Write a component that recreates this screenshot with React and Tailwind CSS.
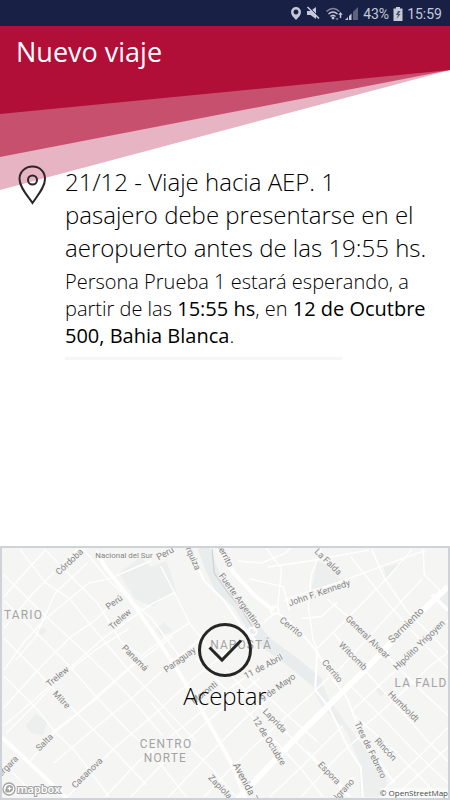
import React from 'react';

const parks = [
  'M118 572 L140 556 L150 566 L166 560 L176 590 L152 606 L134 598 Z',
  'M318 560 L334 566 L342 580 L312 590 Z',
  'M385 566 L404 562 L388 577 Z',
  'M434 597 L450 586 L450 614 Z',
  'M24 726 L34 714 L46 722 L42 736 L30 734 Z',
  'M155 628 L164 622 L172 630 L160 636 Z',
  'M377 690 L382 687 L388 692 L382 697 Z',
  'M36 630 L42 627 L45 631 L40 635 Z',
  'M312 672 L322 680 L330 700 L346 722 L362 744 L388 778 L388 798 L362 798 L360 762 L348 732 L322 706 L314 690 Z',
];

const streets = [
  // towards the lower right
  'M18 548 L44 582 L68 598 L94 630 L126 668 L160 704 L196 742',
  'M43 548 L74 580 L96 602 L120 641 L140 655',
  'M2 574 L40 612 L75 644 L104 672 L130 698 L162 736',
  'M2 600 L32 630 L66 664 L96 698 L128 732 L150 752 L186 798',
  'M2 638 L36 672 L74 712 L112 750 L146 786',
  'M2 676 L35 709 L55 734 L74 752 L108 798',
  'M82 548 L110 582 L150 617 L182 660',
  'M2 764 L34 798',
  'M196 658 L236 700 L270 736 L302 770 L324 798',
  'M226 670 L262 708 L296 742 L330 776 L350 798',
  'M250 678 L284 712 L318 742',
  'M150 702 L180 738 L214 772 L236 798',
  'M160 565 L174 592 L190 624 L212 652',
  'M373 548 L386 578 L410 612 L450 652',
  'M352 556 L387 600 L424 642 L450 668',
  'M328 598 L349 616 L381 648 L420 688 L450 716',
  'M334 632 L366 670 L398 706 L428 740 L450 762',
  'M350 684 L382 716 L414 750 L450 784',
  'M356 716 L394 750 L424 780 L440 798',
  'M308 752 L340 784 L352 798',
  'M425 548 L426 574 L446 594',
  // towards the upper right
  'M2 596 L26 568 L43 550',
  'M2 628 L30 594 L52 572 L76 548',
  'M2 670 L22 642 L44 618 L88 582 L108 578 L150 560',
  'M14 660 L34 636 L54 592 L86 562',
  'M2 708 L36 670 L70 636 L95 619 L120 594',
  'M4 734 L32 706 L66 670 L102 638 L150 604 L174 592',
  'M2 726 L28 704 L60 676 L94 650 L128 628',
  'M38 746 L54 730 L76 714 L114 680 L150 648 L190 622',
  'M28 762 L54 732 L94 700 L134 664 L172 636',
  'M52 764 L92 730 L134 696 L176 658 L206 634',
  'M66 798 L112 750 L150 718 L196 676 L232 648',
  'M104 798 L138 762 L184 726 L228 690 L264 664',
  'M130 798 L176 750 L214 716 L260 678',
  'M168 798 L206 758 L246 718 L280 690',
  'M204 798 L232 768 L268 734 L306 700 L338 670',
  'M270 798 L306 764 L344 726',
  'M302 798 L340 756 L360 738',
  'M334 798 L354 778',
  'M386 790 L420 758 L450 728',
  'M396 798 L450 748',
  'M364 728 L396 700 L432 666 L450 652',
  'M352 712 L382 684 L420 650 L450 620',
  'M318 648 L348 618 L388 578 L414 548',
  'M338 672 L378 628 L424 578',
  'M300 594 L344 580 L384 565 L428 549',
  'M268 566 L310 560 L370 549',
  'M302 618 L322 616 L338 602',
  'M322 548 L312 574 L309 606 L314 640 L318 650',
  'M238 560 L262 562 L286 552 L292 546',
  'M250 578 L284 586 L290 610',
  'M266 546 L282 568 L278 608',
  'M284 600 L300 594',
  'M254 630 L276 612',
];

const labels = [
  { text: 'Córdoba', x: 70, y: 563, angle: -43 },
  { text: 'Nacional del Sur', x: 123, y: 557, angle: 0, small: true },
  { text: 'Perú', x: 115, y: 604, angle: -36 },
  { text: 'Trelew', x: 121, y: 621, angle: -42 },
  { text: 'Panamá', x: 132, y: 660, angle: 45 },
  { text: 'Perú', x: 166, y: 555, angle: -28 },
  { text: 'Urquiza', x: 189, y: 556, angle: 66 },
  { text: 'Cerrito', x: 222, y: 555, angle: 62 },
  { text: 'Fuerte Argentino', x: 238, y: 602, angle: 54 },
  { text: 'La Falda', x: 327, y: 563, angle: 44 },
  { text: 'John F. Kennedy', x: 321, y: 595, angle: -19 },
  { text: 'General Alvear', x: 367, y: 639, angle: 44 },
  { text: 'Witcomb', x: 352, y: 658, angle: 45 },
  { text: 'Sarmiento', x: 410, y: 627, angle: -45, large: true },
  { text: 'Hipólito Yrigoyen', x: 423, y: 647, angle: -44 },
  { text: 'Cerrito', x: 290, y: 629, angle: 38 },
  { text: 'Cerrito', x: 331, y: 673, angle: 50 },
  { text: 'Paraguay', x: 181, y: 662, angle: -36 },
  { text: '11 de Abril', x: 265, y: 669, angle: -28 },
  { text: '9 de Mayo', x: 280, y: 690, angle: -36 },
  { text: 'Moronti', x: 206, y: 695, angle: -38 },
  { text: 'Laprida', x: 273, y: 723, angle: 46 },
  { text: '12 de Octubre', x: 267, y: 743, angle: 58 },
  { text: 'Avenida 7', x: 243, y: 785, angle: 62, large: true },
  { text: 'Zapiola', x: 218, y: 790, angle: 46 },
  { text: 'Trelew', x: 58, y: 679, angle: -40 },
  { text: 'Mitre', x: 58, y: 702, angle: 46 },
  { text: 'Salta', x: 45, y: 745, angle: -45 },
  { text: 'Vergara', x: 6, y: 771, angle: -45 },
  { text: 'Casanova', x: 88, y: 776, angle: -44 },
  { text: 'Humboldt', x: 403, y: 709, angle: 45 },
  { text: 'Tres de Febrero', x: 369, y: 752, angle: 64 },
  { text: 'Rincón', x: 385, y: 752, angle: 47 },
  { text: 'Espora', x: 328, y: 776, angle: 46 },
  { text: 'Belgrano', x: 344, y: 796, angle: -48 },
];

const labelSize = ({ small, large }) => {
  if (small) return 'text-[8px]';
  return large ? 'text-[10px]' : 'text-[9px]';
};

const StatusBar = () => (
  <div className="relative z-10 flex h-[26px] items-center justify-end bg-[#182045] pt-0.5 pr-2 font-['Roboto',sans-serif] text-sm text-[#c5c9d8]">
    <svg viewBox="0 0 74 18" className="h-[18px] w-[74px]" aria-hidden="true">
      <path
        d="M7 2 a5 5 0 0 1 5 5 c0 3 -2.500 5.500 -5 8 c-2.500 -2.500 -5 -5 -5 -8 a5 5 0 0 1 5 -5 Z M7 4.500 a2.500 2.500 0 1 0 0.010 0 Z"
        fill="currentColor"
        fillRule="evenodd"
      />
      <path d="M18 6 h3.500 l5.500 -4 v12 l-5.500 -4 h-3.500 Z" fill="currentColor" />
      <path d="M19.500 1.500 L31 13" stroke="#182045" strokeWidth="1" />
      <path d="M18.500 2 L30 13.500" stroke="currentColor" strokeWidth="1.600" />
      <g fill="none" stroke="currentColor" strokeWidth="1.500">
        <path d="M37.500 6.500 Q44 0.500 50.500 6.500" opacity="0.600" />
        <path d="M39.500 9 Q44 5 48.500 9" />
        <path d="M41.500 11.500 Q44 9 46.500 11.500" />
      </g>
      <circle cx="44" cy="13" r="1.400" fill="currentColor" />
      <path d="M51.500 7 l2.200 2.800 h-1.500 v3.200 h-1.400 v-3.200 h-1.500 Z" fill="currentColor" />
      <path d="M48 15.500 l-1.800 -2.500 h3.600 Z" fill="currentColor" opacity="0.500" />
      <path d="M56 15 l3 -3 v3 Z M60 15 v-4 l2.500 -2.500 v6.500 Z" fill="currentColor" />
      <path d="M64 15 V7 l5 -5 v13 Z" fill="currentColor" opacity="0.400" />
    </svg>
    <span>43%</span>
    <svg viewBox="0 0 10 14" className="mx-1 h-[14px] w-[10px]" aria-hidden="true">
      <path d="M3 0 h4 v1.500 h2.500 v12.500 H0.500 V1.500 H3 Z" fill="currentColor" />
      <path
        d="M5 4 L3 8 h2 L3.500 12 L7.500 7 H5.500 L7.500 4 Z"
        fill="#182045"
        opacity="0.700"
      />
    </svg>
    <span>15:59</span>
  </div>
);

const HeaderBackground = () => (
  <svg
    viewBox="0 0 450 164"
    preserveAspectRatio="none"
    className="absolute inset-x-0 top-0 h-[164px] w-full"
    aria-hidden="true"
  >
    <path d="M0 0 H450 V44 L0 164 Z" fill="#e6b4c2" />
    <path d="M0 0 H450 V44 L0 131 Z" fill="#c7506f" />
    <path d="M0 0 H450 V44 L0 88 Z" fill="#b10e38" />
  </svg>
);

const Trip = () => (
  <section className="relative flex pr-4 pl-[18px]">
    <svg
      viewBox="0 0 28 40"
      className="h-10 w-7 shrink-0"
      fill="none"
      stroke="#2b2527"
      strokeWidth="2"
      aria-hidden="true"
    >
      <path d="M14.500 1.500 C7 1.500 1.500 7 1.500 14 C1.500 22 9 30 14.500 38 C20 30 27 22 27 14 C27 7 22 1.500 14.500 1.500 Z" />
      <circle cx="14.500" cy="15" r="4.500" />
    </svg>
    <div className="ml-[19px] font-light text-black">
      <h2 className="text-2xl leading-[33px]">
        21/12 - Viaje hacia AEP. 1 pasajero debe presentarse en el aeropuerto
        antes de las 19:55 hs.
      </h2>
      <p className="mt-1 text-xl leading-[27px]">
        Persona Prueba 1 estará esperando, a partir de las{' '}
        <strong className="font-medium">15:55 hs</strong>, en{' '}
        <strong className="font-medium">12 de Ocutbre 500, Bahia Blanca</strong>.
      </p>
      <div className="mt-2 h-[3px] w-3/4 bg-[#f6f6f6]" />
    </div>
  </section>
);

const StreetMap = () => (
  <svg
    viewBox="0 546 450 254"
    preserveAspectRatio="xMidYMid slice"
    className="absolute inset-0 h-full w-full font-['Roboto',sans-serif]"
    aria-hidden="true"
  >
    <rect y="546" width="450" height="254" fill="#f5f5f4" />
    <g fill="#edefef">
      {parks.map((d) => (
        <path key={d} d={d} />
      ))}
    </g>
    <g fill="none" strokeLinejoin="round">
      <path
        d="M203 546 L211 567 L220 586 L238 602 L250 622 L266 642 L296 664 L320 684"
        stroke="#e9eced"
        strokeWidth="12"
      />
      <g stroke="#ffffff" strokeWidth="1.400">
        {streets.map((d) => (
          <path key={d} d={d} />
        ))}
      </g>
      <path
        d="M212 548 L214 572 L228 592 L240 606 L253 627"
        stroke="#cfd4d7"
        strokeWidth="1.300"
      />
      <g stroke="#ffffff" strokeWidth="2">
        <path d="M190 550 L204 580 L224 600 L240 624 L256 640" />
        <path d="M278 612 L300 630 L318 652 L334 680 L348 698 L358 724 L364 740 L396 784" />
        <path d="M318 650 L316 690 L330 708 L350 750 L362 768 L364 798" />
      </g>
      <circle cx="253" cy="631" r="4" stroke="#ffffff" strokeWidth="2" />
      <circle cx="275" cy="610" r="4" stroke="#ffffff" strokeWidth="2" />
      <g stroke="#ffffff" strokeWidth="4">
        <path d="M95 550 L104 566 L126 594 L150 629 L177 670 L204 715 L233 767 L246 800" />
        <path d="M218 548 L234 572 L254 594 L274 610" />
        <path d="M0 738 L28 764 L66 800" />
        <path d="M434 594 L450 610" />
      </g>
      <path
        d="M450 586 L410 624 L366 670 L300 735 L238 800"
        stroke="#ffffff"
        strokeWidth="6"
      />
    </g>
    <g
      textAnchor="middle"
      fill="#858585"
      stroke="#f5f5f4"
      strokeWidth="2"
      className="[paint-order:stroke]"
    >
      {labels.map((label) => (
        <text
          key={`${label.text}-${label.x}`}
          transform={`translate(${label.x} ${label.y}) rotate(${label.angle})`}
          className={labelSize(label)}
        >
          {label.text}
        </text>
      ))}
    </g>
    <g fill="#a3a3a3" className="text-xs tracking-widest">
      <text x="2" y="619">TARIO</text>
      <text x="210" y="649">NAPOSTÁ</text>
      <text x="139" y="749">CENTRO</text>
      <text x="143" y="763">NORTE</text>
      <text x="396" y="687">LA FALD</text>
    </g>
  </svg>
);

const MapboxLogo = () => (
  <a href="#mapbox" className="absolute bottom-0 left-0" aria-label="mapbox">
    <svg viewBox="0 0 64 18" className="h-[18px] w-16">
      <circle cx="7" cy="9" r="6" fill="#ffffff" stroke="#a3a3a3" strokeWidth="1.300" />
      <path
        d="M3.500 12.500 C3 8 4.500 5 7.500 5 C10 5 11.500 7 11 9 C10.500 12 7.500 13 3.500 12.500 Z"
        fill="#a3a3a3"
      />
      <path
        d="M7.500 6 l0.800 1.700 l1.700 0.800 l-1.700 0.800 l-0.800 1.700 l-0.800 -1.700 l-1.700 -0.800 l1.700 -0.800 Z"
        fill="#ffffff"
      />
      <text
        x="15"
        y="13"
        fill="#ffffff"
        stroke="#a3a3a3"
        strokeWidth="2"
        className="text-[11px] font-semibold [paint-order:stroke]"
      >
        mapbox
      </text>
    </svg>
  </a>
);

const AcceptButton = () => (
  <button
    type="button"
    className="relative mt-[74px] flex flex-col items-center text-2xl leading-[36px] font-light text-black"
  >
    <svg
      viewBox="0 0 56 56"
      className="h-14 w-14"
      fill="none"
      stroke="#262626"
      strokeWidth="3"
      aria-hidden="true"
    >
      <circle cx="28" cy="28" r="25.500" />
      <path d="M12.500 25.500 L25 38 L44 18.500" />
    </svg>
    Aceptar
  </button>
);

const App = () => (
  <div className="flex min-h-screen flex-col bg-white font-['Open_Sans',sans-serif]">
    <StatusBar />
    <main className="relative flex grow flex-col">
      <HeaderBackground />
      <h1 className="relative pt-2 pb-[95px] pl-4 text-[27px] leading-[36px] text-white">
        Nuevo viaje
      </h1>
      <Trip />
      <div className="relative mt-auto flex h-[254px] items-start justify-center overflow-hidden border-2 border-[#cdd3d8]">
        <StreetMap />
        <AcceptButton />
        <MapboxLogo />
        <a
          href="#openstreetmap"
          className="absolute right-0 bottom-0 bg-white/50 text-[8px] leading-[10px] text-[#4a4a4a]"
        >
          © OpenStreetMap
        </a>
      </div>
    </main>
  </div>
);

export default App;
